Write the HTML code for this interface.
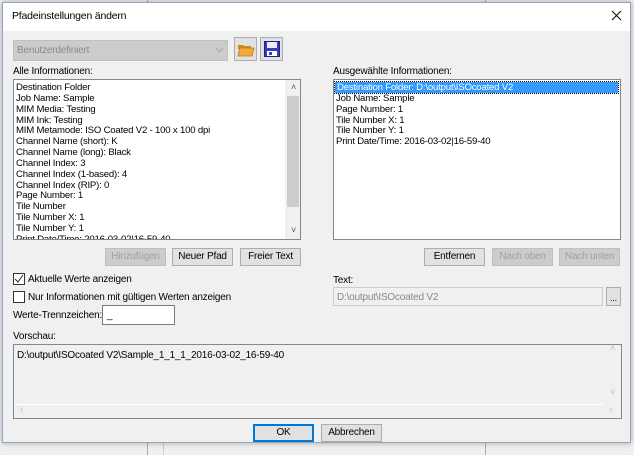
<!DOCTYPE html>
<html><head><meta charset="utf-8"><style>
*{box-sizing:border-box;margin:0;padding:0}
body{width:634px;height:455px;overflow:hidden;background:#f0f0f0;font:10px "Liberation Sans",sans-serif;letter-spacing:-0.2px;color:#000;position:relative}
.a{position:absolute}
.dlg{left:2px;top:2px;width:629px;height:441px;background:#f0f0f0;border:1px solid #8fa6c0;box-shadow:0 0 6px rgba(0,0,0,.3)}
.title{left:0;top:0;width:627px;height:28px;background:#fff}
.btn{position:absolute;height:18px;border:1px solid #adadad;background:#e1e1e1;text-align:center;line-height:16px;font-size:10px}
.dis{color:#a0a0a0;background:#ccc;border-color:#bfbfbf}
.list{position:absolute;background:#fff;border:1px solid #828790;overflow:hidden}
.list div{height:10.85px;line-height:11px;padding-left:2px;white-space:nowrap;font-size:9.6px}
.cb{position:absolute;width:12px;height:12px;border:1px solid #333;background:#fff}
</style></head><body>
<div class="a" style="left:147px;top:0;width:1px;height:455px;background:#aaa"></div>
<div class="a" style="left:163px;top:443px;width:1px;height:12px;background:#ccc"></div>
<div class="a" style="left:485px;top:0;width:1px;height:455px;background:#aaa"></div>
<div class="a dlg">
 <div class="a title"></div>
</div>
<div class="a" style="left:12px;top:10px;font-size:10.5px">Pfadeinstellungen ändern</div>
<svg class="a" style="left:611px;top:10px" width="11" height="11"><path d="M1 1L10 10M10 1L1 10" stroke="#111" stroke-width="1.1"/></svg>
<div class="a" style="left:13px;top:40px;width:215px;height:21px;background:#ccc;border:1px solid #c0c0c0;color:#8a8a8a;padding:4px 0 0 3px">Benutzerdefiniert</div>
<svg class="a" style="left:215px;top:47px" width="9" height="6"><path d="M0.5 0.5L4.5 4.5L8.5 0.5" stroke="#aaa" fill="none"/></svg>
<div class="btn" style="left:234px;top:37px;width:23px;height:24px"></div>
<svg class="a" style="left:237px;top:42px" width="18" height="15"><path d="M1 3h5l1 1h7v3H1z" fill="#c98a1e"/><path d="M1 14L3 6h14l-2 8z" fill="#f4a93a" stroke="#c07a10" stroke-width=".8"/></svg>
<div class="btn" style="left:260px;top:37px;width:23px;height:24px"></div>
<svg class="a" style="left:264px;top:41px" width="16" height="16"><rect x="0.5" y="0.5" width="15" height="15" fill="#3c3cb5" stroke="#202080"/><rect x="3" y="1" width="10" height="6" fill="#e8e8ff"/><rect x="3" y="10" width="10" height="5" fill="#fff"/><rect x="5" y="11" width="3" height="3" fill="#3c3cb5"/></svg>
<div class="a" style="left:13px;top:66px">Alle Informationen:</div>
<div class="list" style="left:13px;top:79px;width:288px;height:161px;padding-top:2px">
<div>Destination Folder</div><div>Job Name: Sample</div><div>MIM Media: Testing</div><div>MIM Ink: Testing</div><div>MIM Metamode: ISO Coated V2 - 100 x 100 dpi</div><div>Channel Name (short): K</div><div>Channel Name (long): Black</div><div>Channel Index: 3</div><div>Channel Index (1-based): 4</div><div>Channel Index (RIP): 0</div><div>Page Number: 1</div><div>Tile Number</div><div>Tile Number X: 1</div><div>Tile Number Y: 1</div><div>Print Date/Time: 2016-03-02|16-59-40</div>
<span class="a" style="right:0;top:0;width:15px;height:159px;background:#f0f0f0"></span>
<span class="a" style="right:1px;top:16px;width:12px;height:111px;background:#cdcdcd"></span>
<span class="a" style="right:4px;top:2px;font-size:9px;color:#555">&#x2C4;</span>
<span class="a" style="right:4px;top:145px;font-size:9px;color:#555">&#x2C5;</span>
</div>
<div class="btn dis" style="left:105px;top:248px;width:61px">Hinzufügen</div>
<div class="btn" style="left:172px;top:248px;width:61px">Neuer Pfad</div>
<div class="btn" style="left:240px;top:248px;width:61px">Freier Text</div>
<div class="cb" style="left:13px;top:273px"></div>
<svg class="a" style="left:14px;top:274px" width="10" height="10"><path d="M1 5l3 3 5-7" stroke="#222" fill="none"/></svg>
<div class="a" style="left:28px;top:274px">Aktuelle Werte anzeigen</div>
<div class="cb" style="left:13px;top:291px"></div>
<div class="a" style="left:28px;top:292px">Nur Informationen mit gültigen Werten anzeigen</div>
<div class="a" style="left:13px;top:310px">Werte-Trennzeichen:</div>
<div class="a" style="left:102px;top:305px;width:73px;height:20px;background:#fff;border:1px solid #7a7a7a;padding:4px 0 0 4px">_</div>
<div class="a" style="left:333px;top:66px">Ausgewählte Informationen:</div>
<div class="list" style="left:333px;top:79px;width:288px;height:161px;padding-top:2px">
<div style="background:#3399ff;color:#fff;margin:0 2px 0 1px;outline:1px dotted #000">Destination Folder: D:\output\ISOcoated V2</div><div>Job Name: Sample</div><div>Page Number: 1</div><div>Tile Number X: 1</div><div>Tile Number Y: 1</div><div>Print Date/Time: 2016-03-02|16-59-40</div>
</div>
<div class="btn" style="left:424px;top:248px;width:61px">Entfernen</div>
<div class="btn dis" style="left:492px;top:248px;width:61px">Nach oben</div>
<div class="btn dis" style="left:559px;top:248px;width:61px">Nach unten</div>
<div class="a" style="left:333px;top:275px">Text:</div>
<div class="a" style="left:333px;top:287px;width:270px;height:19px;border:1px solid #ccc;background:#f0f0f0;color:#888;padding:4px 0 0 3px">D:\output\ISOcoated V2</div>
<div class="btn" style="left:606px;top:287px;width:15px;height:19px;line-height:20px;font-size:9px">...</div>
<div class="a" style="left:13px;top:331px">Vorschau:</div>
<div class="a" style="left:13px;top:344px;width:609px;height:75px;border:1px solid #828790;background:#f0f0f0;padding:5px 0 0 3px">D:\output\ISOcoated V2\Sample_1_1_1_2016-03-02_16-59-40
<span class="a" style="left:0;top:59px;width:591px;height:14px;border-top:1px solid #fff"></span>
<span class="a" style="left:6px;top:59px;color:#bbb;font-size:10px">&lsaquo;</span>
<span class="a" style="left:595px;top:59px;color:#bbb;font-size:10px">&rsaquo;</span>
<span class="a" style="left:596px;top:-2px;color:#bbb;font-size:9px">&#x2C4;</span>
<span class="a" style="left:596px;top:42px;color:#bbb;font-size:9px">&#x2C5;</span>
</div>
<div class="btn" style="left:253px;top:424px;width:61px;border:1px solid #0078d7;box-shadow:inset 0 0 0 1px #0078d7">OK</div>
<div class="btn" style="left:321px;top:424px;width:61px">Abbrechen</div>
</body></html>
